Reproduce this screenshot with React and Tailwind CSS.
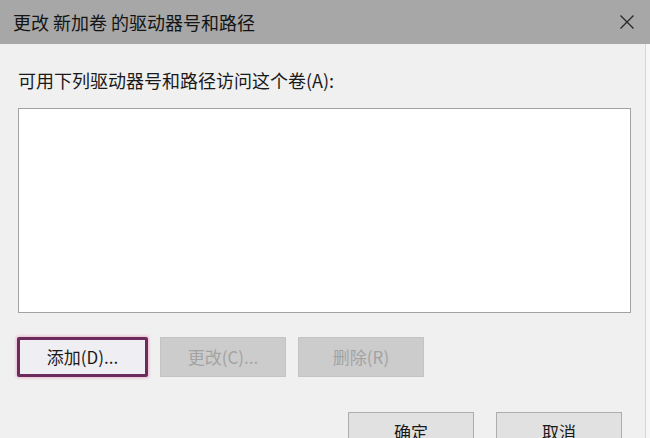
import React from "react";

const font = { fontFamily: '"Noto Sans CJK SC", "Noto Sans", sans-serif' };

export default function App() {
  return (
    <div
      className="w-[650px] h-[438px] overflow-hidden bg-[#f0f0f0] flex flex-col"
      style={font}
    >
      <div className="h-[44px] shrink-0 bg-[#a7a7a7] flex items-center justify-between pl-[13px] pr-[16px]">
        <span className="text-[18px] leading-none text-[#141414] whitespace-pre">更改 新加卷 的驱动器号和路径</span>
        <svg width="16" height="16" viewBox="0 0 16 16" className="mr-[-1px]">
          <path d="M1.5 1.5 L14.5 14.5 M14.5 1.5 L1.5 14.5" stroke="#2a2a2a" strokeWidth="1.4" fill="none" />
        </svg>
      </div>
      <div className="flex flex-1">
        <div className="w-[646px] shrink-0 border-r border-[#d6d6d6] bg-[#f0f0f0] flex flex-col pl-[18px]">
          <div className="mt-[24px] h-[24px] flex items-center text-[18px] leading-none text-[#1a1a1a]">
            可用下列驱动器号和路径访问这个卷(A):
          </div>
          <div className="mt-[16px] w-[613px] h-[205px] bg-white border border-[#a2a2a2]" />
          <div className="mt-[24px] flex gap-[12px]">
            <div className="ml-[-1px] w-[131px] h-[40px] rounded-[2px] border-[3px] border-[#6d2b5d] bg-[#eeeef3] shadow-[0_0_3px_1px_rgba(230,150,180,0.6)] flex items-center justify-center text-[17px] text-[#1a1a1a]">
              添加(D)...
            </div>
            <div className="w-[126px] h-[40px] bg-[#cccccc] border border-[#c4c4c4] flex items-center justify-center text-[17px] text-[#a3a3a3]">
              更改(C)...
            </div>
            <div className="w-[126px] h-[40px] bg-[#cccccc] border border-[#c4c4c4] flex items-center justify-center text-[17px] text-[#a3a3a3]">
              删除(R)
            </div>
          </div>
          <div className="mt-[35px] flex gap-[22px] pl-[330px]">
            <div className="w-[126px] h-[40px] bg-[#e1e1e1] border border-[#adadad] flex items-center justify-center text-[17px] text-[#1a1a1a]">
              确定
            </div>
            <div className="w-[126px] h-[40px] bg-[#e1e1e1] border border-[#adadad] flex items-center justify-center text-[17px] text-[#1a1a1a]">
              取消
            </div>
          </div>
        </div>
        <div className="flex-1 bg-[#f7f7f7]" />
      </div>
    </div>
  );
}
